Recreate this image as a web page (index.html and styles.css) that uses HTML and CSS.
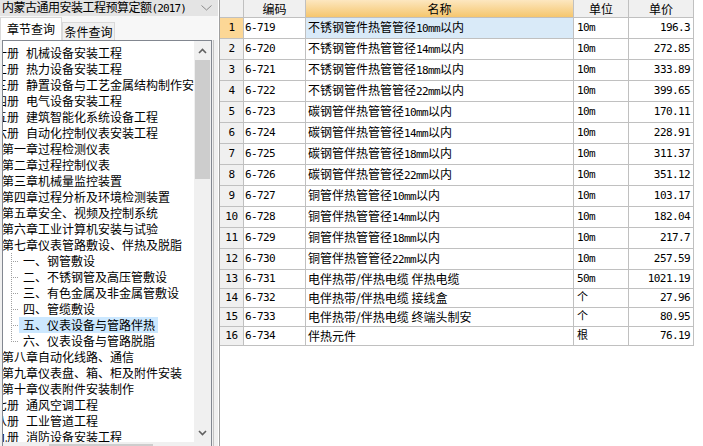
FILE: index.html
```html
<!DOCTYPE html>
<html lang="zh-CN">
<head>
<meta charset="utf-8">
<title>定额查询</title>
<link rel="stylesheet" href="styles.css">
</head>
<body>
<div class="app">
  <aside class="left">
    <div class="combo">
      <span class="combo-text">内蒙古通用安装工程预算定额<span class="cn">(2017)</span></span>
      <svg class="combo-arrow" width="11" height="6" viewBox="0 0 11 6"><path d="M0.5 0.5 L5.5 5 L10.5 0.5" fill="none" stroke="#8a8a8a" stroke-width="1"/></svg>
    </div>
    <div class="tabs">
      <div class="tab active">章节查询</div>
      <div class="tab">条件查询</div>
    </div>
    <div class="lower">
      <div class="treebox">
        <div class="tree-main">
          <div class="tree">
            <div class="tree-content">
              <div class="row l0"><span>第一册</span><span class="vt">机械设备安装工程</span></div>
              <div class="row l0"><span>第二册</span><span class="vt">热力设备安装工程</span></div>
              <div class="row l0"><span>第三册</span><span class="vt">静置设备与工艺金属结构制作安装工程</span></div>
              <div class="row l0"><span>第四册</span><span class="vt">电气设备安装工程</span></div>
              <div class="row l0"><span>第五册</span><span class="vt">建筑智能化系统设备工程</span></div>
              <div class="row l0"><span>第六册</span><span class="vt">自动化控制仪表安装工程</span></div>
              <div class="row l1">第一章过程检测仪表</div>
              <div class="row l1">第二章过程控制仪表</div>
              <div class="row l1">第三章机械量监控装置</div>
              <div class="row l1">第四章过程分析及环境检测装置</div>
              <div class="row l1">第五章安全、视频及控制系统</div>
              <div class="row l1">第六章工业计算机安装与试验</div>
              <div class="row l1">第七章仪表管路敷设、伴热及脱脂</div>
              <div class="row l2"><span class="conn"></span><span class="lbl">一、钢管敷设</span></div>
              <div class="row l2"><span class="conn"></span><span class="lbl">二、不锈钢管及高压管敷设</span></div>
              <div class="row l2"><span class="conn"></span><span class="lbl">三、有色金属及非金属管敷设</span></div>
              <div class="row l2"><span class="conn"></span><span class="lbl">四、管缆敷设</span></div>
              <div class="row l2"><span class="conn"></span><span class="lbl sel">五、仪表设备与管路伴热</span></div>
              <div class="row l2"><span class="conn last"></span><span class="lbl">六、仪表设备与管路脱脂</span></div>
              <div class="row l1">第八章自动化线路、通信</div>
              <div class="row l1">第九章仪表盘、箱、柜及附件安装</div>
              <div class="row l1">第十章仪表附件安装制作</div>
              <div class="row l0"><span>第七册</span><span class="vt">通风空调工程</span></div>
              <div class="row l0"><span>第八册</span><span class="vt">工业管道工程</span></div>
              <div class="row l0"><span>第九册</span><span class="vt">消防设备安装工程</span></div>
            </div>
          </div>
          <div class="vscroll">
            <div class="sbtn up"><svg width="9" height="6" viewBox="0 0 9 6"><path d="M1 5 L4.5 1.5 L8 5" fill="none" stroke="#606060" stroke-width="1.6"/></svg></div>
            <div class="track"><div class="thumb"></div></div>
            <div class="sbtn down"><svg width="9" height="6" viewBox="0 0 9 6"><path d="M1 1 L4.5 4.5 L8 1" fill="none" stroke="#606060" stroke-width="1.6"/></svg></div>
          </div>
        </div>
        <div class="hscroll"><div class="hthumb"></div></div>
      </div>
    </div>
  </aside>
  <main class="grid">
    <table class="data">
      <thead>
        <tr>
          <th class="c-no"></th>
          <th class="c-code">编码</th>
          <th class="c-name hl">名称</th>
          <th class="c-unit">单位</th>
          <th class="c-price">单价</th>
        </tr>
      </thead>
      <tbody>
        <tr class="cur"><td class="c-no">1</td><td class="c-code">6-719</td><td class="c-name">不锈钢管件热管管径<span class="n">10mm</span>以内</td><td class="c-unit">10m</td><td class="c-price">196.3</td></tr>
        <tr><td class="c-no">2</td><td class="c-code">6-720</td><td class="c-name">不锈钢管件热管管径<span class="n">14mm</span>以内</td><td class="c-unit">10m</td><td class="c-price">272.85</td></tr>
        <tr><td class="c-no">3</td><td class="c-code">6-721</td><td class="c-name">不锈钢管件热管管径<span class="n">18mm</span>以内</td><td class="c-unit">10m</td><td class="c-price">333.89</td></tr>
        <tr><td class="c-no">4</td><td class="c-code">6-722</td><td class="c-name">不锈钢管件热管管径<span class="n">22mm</span>以内</td><td class="c-unit">10m</td><td class="c-price">399.65</td></tr>
        <tr><td class="c-no">5</td><td class="c-code">6-723</td><td class="c-name">碳钢管伴热管管径<span class="n">10mm</span>以内</td><td class="c-unit">10m</td><td class="c-price">170.11</td></tr>
        <tr><td class="c-no">6</td><td class="c-code">6-724</td><td class="c-name">碳钢管伴热管管径<span class="n">14mm</span>以内</td><td class="c-unit">10m</td><td class="c-price">228.91</td></tr>
        <tr><td class="c-no">7</td><td class="c-code">6-725</td><td class="c-name">碳钢管伴热管管径<span class="n">18mm</span>以内</td><td class="c-unit">10m</td><td class="c-price">311.37</td></tr>
        <tr><td class="c-no">8</td><td class="c-code">6-726</td><td class="c-name">碳钢管伴热管管径<span class="n">22mm</span>以内</td><td class="c-unit">10m</td><td class="c-price">351.12</td></tr>
        <tr><td class="c-no">9</td><td class="c-code">6-727</td><td class="c-name">铜管伴热管管径<span class="n">10mm</span>以内</td><td class="c-unit">10m</td><td class="c-price">103.17</td></tr>
        <tr><td class="c-no">10</td><td class="c-code">6-728</td><td class="c-name">铜管伴热管管径<span class="n">14mm</span>以内</td><td class="c-unit">10m</td><td class="c-price">182.04</td></tr>
        <tr><td class="c-no">11</td><td class="c-code">6-729</td><td class="c-name">铜管伴热管管径<span class="n">18mm</span>以内</td><td class="c-unit">10m</td><td class="c-price">217.7</td></tr>
        <tr><td class="c-no">12</td><td class="c-code">6-730</td><td class="c-name">铜管伴热管管径<span class="n">22mm</span>以内</td><td class="c-unit">10m</td><td class="c-price">257.59</td></tr>
        <tr><td class="c-no">13</td><td class="c-code">6-731</td><td class="c-name">电伴热带/伴热电缆 伴热电缆</td><td class="c-unit">50m</td><td class="c-price">1021.19</td></tr>
        <tr><td class="c-no">14</td><td class="c-code">6-732</td><td class="c-name">电伴热带/伴热电缆 接线盒</td><td class="c-unit">个</td><td class="c-price">27.96</td></tr>
        <tr><td class="c-no">15</td><td class="c-code">6-733</td><td class="c-name">电伴热带/伴热电缆 终端头制安</td><td class="c-unit">个</td><td class="c-price">80.95</td></tr>
        <tr><td class="c-no">16</td><td class="c-code">6-734</td><td class="c-name">伴热元件</td><td class="c-unit">根</td><td class="c-price">76.19</td></tr>
      </tbody>
    </table>
  </main>
</div>
</body>
</html>
```

FILE: styles.css
```css
* { box-sizing: border-box; }
html, body { margin: 0; padding: 0; }
body {
  width: 703px;
  height: 446px;
  overflow: hidden;
  background: #ffffff;
  font-family: "Noto Sans CJK SC", "Liberation Sans", sans-serif;
  font-size: 12px;
  color: #000000;
}
.app { display: flex; height: 446px; }

/* left panel */
.left {
  width: 218px;
  flex: none;
  display: flex;
  flex-direction: column;
  background: #f0f0f0;
}
.combo {
  height: 16px;
  background: #e4e4e4;
  display: flex;
  align-items: center;
  justify-content: space-between;
  padding: 0 6px 0 2px;
  line-height: 16px;
  white-space: nowrap;
}
.combo-text { letter-spacing: -0.5px; }
.cn {
  font-family: "DejaVu Sans Mono", monospace;
  font-size: 11px;
  letter-spacing: -0.9px;
}
.combo-arrow { display: block; }
.tabs {
  height: 24px;
  display: flex;
  align-items: flex-end;
  background: #f7f7f7;
}
.tab {
  height: 18px;
  line-height: 17px;
  padding: 0;
  width: 53px;
  text-align: center;
  border: 1px solid #d9d9d9;
  border-bottom: none;
  background: #f0f0f0;
  white-space: nowrap;
}
.tab.active {
  height: 23px;
  width: 62px;
  line-height: 21px;
  background: #ffffff;
  border-color: #d9d9d9;
}
.lower {
  flex: 1;
  min-height: 0;
  margin-left: 2px;
  width: 212px;
  border-right: 1px solid #c4c4c4;
}
.treebox {
  width: 210px;
  height: 100%;
  border: 1px solid #828790;
  border-bottom: none;
  background: #ffffff;
  display: flex;
  flex-direction: column;
}
.tree-main {
  height: 401px;
  flex: none;
  display: flex;
}
.tree {
  flex: 1;
  overflow: hidden;
  padding-top: 4px;
}
.tree-content { margin-left: -39px; }
.row {
  height: 16px;
  line-height: 16px;
  white-space: nowrap;
  display: flex;
  align-items: center;
}
.l0 { padding-left: 19px; }
.l0 .vt { margin-left: 7px; }
.l1 { padding-left: 38px; }
.l2 { padding-left: 47px; }
.conn {
  width: 8px;
  height: 16px;
  flex: none;
  background:
    repeating-linear-gradient(to bottom, #a0a0a0 0 1px, transparent 1px 2px) 0 0 / 1px 100% no-repeat,
    repeating-linear-gradient(to right, #a0a0a0 0 1px, transparent 1px 2px) 0 8px / 100% 1px no-repeat;
}
.conn.last {
  background:
    repeating-linear-gradient(to bottom, #a0a0a0 0 1px, transparent 1px 2px) 0 0 / 1px 9px no-repeat,
    repeating-linear-gradient(to right, #a0a0a0 0 1px, transparent 1px 2px) 0 8px / 100% 1px no-repeat;
}
.lbl { padding: 0 3px 0 4px; height: 16px; }
.lbl.sel { background: #cce8ff; }

.vscroll {
  width: 17px;
  flex: none;
  background: #f0f0f0;
  display: flex;
  flex-direction: column;
}
.sbtn {
  display: flex;
  align-items: center;
  justify-content: center;
  flex: none;
}
.sbtn.up { height: 19px; }
.sbtn.down { height: 18px; }
.track { flex: 1; }
.thumb {
  margin: 0 1px;
  height: 119px;
  background: #cdcdcd;
}
.hscroll {
  height: 17px;
  flex: none;
  background: #f0f0f0;
  padding: 2px 0 0 46px;
}
.hthumb { width: 104px; height: 13px; background: #cdcdcd; }

/* right grid */
.grid {
  flex: 1;
  margin-left: 1px;
  border-left: 1px solid #a0a0a0;
  background: #ffffff;
}
.data {
  border-collapse: separate;
  border-spacing: 0;
  table-layout: fixed;
  width: 474px;
}
.data th, .data td {
  border-right: 1px solid #c0c0c0;
  border-bottom: 1px solid #c0c0c0;
  padding: 0;
  white-space: nowrap;
  overflow: hidden;
  font-weight: normal;
}
.data th {
  height: 18px;
  line-height: 17px;
  background: #f0f0f0;
  text-align: center;
}
.data th.hl { background: linear-gradient(#fde7c0, #f5c66d); }
.data td { height: 19px; line-height: 18px; }
.c-no { width: 24px; }
.c-code { width: 62px; }
.c-name { width: 268px; }
.c-unit { width: 55px; }
.c-price { width: 65px; }
.data td.c-no {
  text-align: center;
  background: #f0f0f0;
  font-family: "DejaVu Sans Mono", monospace;
  font-size: 11px;
  letter-spacing: -0.4px;
}
.data td.c-code {
  padding-left: 1px;
  font-family: "DejaVu Sans Mono", monospace;
  font-size: 11px;
  letter-spacing: -0.6px;
}
.data td.c-name { padding-left: 2px; }
.data td.c-unit {
  padding-left: 3px;
  font-family: "DejaVu Sans Mono", "Noto Sans CJK SC", monospace;
  font-size: 11px;
  letter-spacing: -0.6px;
}
.data td.c-price {
  text-align: right;
  padding-right: 3px;
  font-family: "DejaVu Sans Mono", monospace;
  font-size: 11px;
  letter-spacing: -0.6px;
}
.n {
  font-family: "DejaVu Sans Mono", monospace;
  font-size: 11px;
  letter-spacing: -0.6px;
}
.data tr.cur td.c-no { background: #fcd796; }
.data tr.cur td.c-name { background: #d9eaf8; }
```
